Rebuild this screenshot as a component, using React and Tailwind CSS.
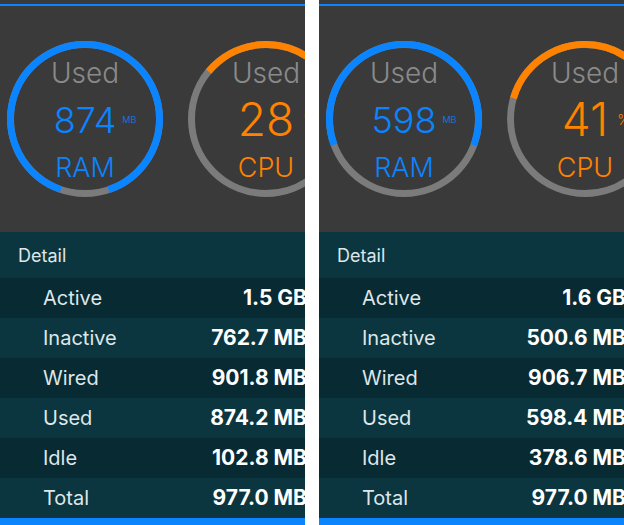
import React from 'react'

const PANELS = [
    {
        ram: '874',
        ramFraction: 874.2 / 977,
        cpu: '28',
        cpuFraction: 0.28,
        rows: [
            ['Active', '1.5 GB'],
            ['Inactive', '762.7 MB'],
            ['Wired', '901.8 MB'],
            ['Used', '874.2 MB'],
            ['Idle', '102.8 MB'],
            ['Total', '977.0 MB'],
        ],
    },
    {
        ram: '598',
        ramFraction: 598.4 / 977,
        cpu: '41',
        cpuFraction: 0.41,
        rows: [
            ['Active', '1.6 GB'],
            ['Inactive', '500.6 MB'],
            ['Wired', '906.7 MB'],
            ['Used', '598.4 MB'],
            ['Idle', '378.6 MB'],
            ['Total', '977.0 MB'],
        ],
    },
]

const R = 74.5
const C = 2 * Math.PI * R

function Ring({ fraction, color, children }) {
    return (
        <div className="relative h-[156px] w-[156px] shrink-0">
            <svg className="absolute inset-0" width="156" height="156" viewBox="0 0 156 156">
                <circle cx="78" cy="78" r={R} fill="none" stroke="#7b7b7b" strokeWidth="7" />
                <circle
                    cx="78"
                    cy="78"
                    r={R}
                    fill="none"
                    stroke={color}
                    strokeWidth="7"
                    strokeDasharray={`${fraction * C} ${C}`}
                    transform={`rotate(${-90 - fraction * 180} 78 78)`}
                />
            </svg>
            <div className="relative flex flex-col items-center font-light">
                <div className="mt-[18px] text-[28px] leading-[28px] text-[#8a8a8a]">Used</div>
                {children}
            </div>
        </div>
    )
}

function Panel({ data }) {
    return (
        <div className="flex w-[305px] shrink-0 flex-col overflow-hidden bg-[#3a3a3a]">
            <div className="h-[4px]" />
            <div className="h-[2px] bg-[#0a84ff]" />
            <div className="flex h-[226px] gap-[25px] pl-[7px] pt-[35px]">
                <Ring fraction={data.ramFraction} color="#0a84ff">
                    <div className="relative mt-[15px] text-[36px] leading-[36px] text-[#0a84ff]">
                        {data.ram}
                        <span className="absolute left-full top-[13px] ml-[6px] text-[9px] leading-[9px]">MB</span>
                    </div>
                    <div className="mt-[16px] text-[27px] leading-[27px] text-[#0a84ff]">RAM</div>
                </Ring>
                <Ring fraction={data.cpuFraction} color="#ff8200">
                    <div className="relative mt-[9px] text-[46px] leading-[46px] text-[#ff8200]">
                        {data.cpu}
                        <span className="absolute left-full top-[17px] ml-[9px] text-[14px] leading-[14px]">%</span>
                    </div>
                    <div className="mt-[12px] text-[27px] leading-[27px] text-[#ff8200]">CPU</div>
                </Ring>
            </div>
            <div className="flex h-[46px] items-center bg-[#0b3640] pl-[18px] text-[18px] text-[#dfe6e8]">
                Detail
            </div>
            {data.rows.map(([label, value], i) => (
                <div
                    key={label}
                    className={
                        i % 2 === 0
                            ? 'flex h-[40px] items-center justify-between bg-[#082a33] pl-[43px]'
                            : 'flex h-[40px] items-center justify-between bg-[#0b3640] pl-[43px]'
                    }
                >
                    <span className="text-[20px] text-[#dfe6e8]">{label}</span>
                    <span className="-mr-[2px] whitespace-nowrap text-[21px] font-bold text-white">{value}</span>
                </div>
            ))}
            <div className="h-[7px] bg-[#0a84ff]" />
        </div>
    )
}

export default function App() {
    return (
        <div
            className="flex h-[525px] w-[624px] gap-[14px] overflow-hidden bg-white"
            style={{ fontFamily: 'Inter, "Noto Sans", sans-serif' }}
        >
            {PANELS.map((p, i) => (
                <Panel key={i} data={p} />
            ))}
        </div>
    )
}
